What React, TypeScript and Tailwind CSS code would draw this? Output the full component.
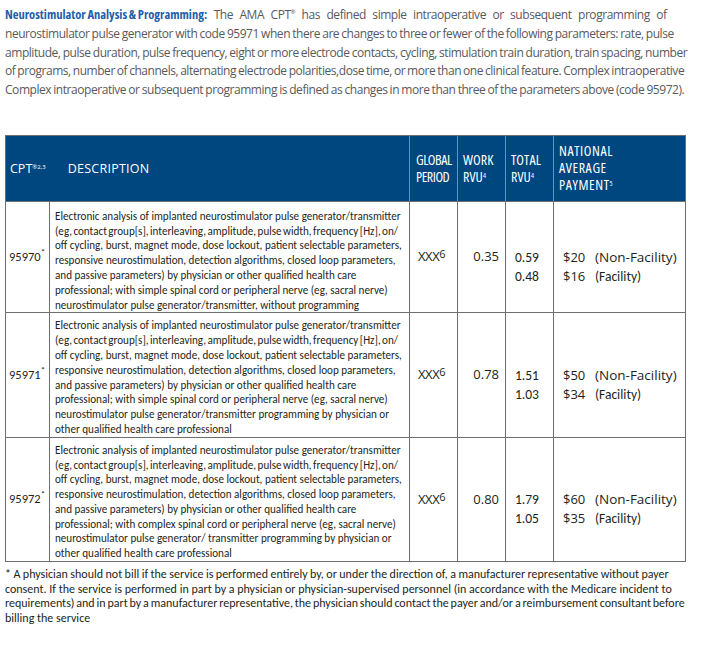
import React from "react";

const rows = [
  {
    code: "95970",
    pt: "pt-[7px]",
    lines: [
      "Electronic analysis of implanted neurostimulator pulse generator/transmitter",
      "(eg, contact group[s], interleaving, amplitude, pulse width, frequency [Hz], on/",
      "off cycling, burst, magnet mode, dose lockout, patient selectable parameters,",
      "responsive neurostimulation, detection algorithms, closed loop parameters,",
      "and passive parameters) by physician or other qualified health care",
      "professional; with simple spinal cord or peripheral nerve (eg, sacral nerve)",
      "neurostimulator pulse generator/transmitter, without programming",
    ],
    work: "0.35",
    total: ["0.59", "0.48"],
    pay: ["$20", "$16"],
  },
  {
    code: "95971",
    pt: "pt-[5px]",
    lines: [
      "Electronic analysis of implanted neurostimulator pulse generator/transmitter",
      "(eg, contact group[s], interleaving, amplitude, pulse width, frequency [Hz], on/",
      "off cycling, burst, magnet mode, dose lockout, patient selectable parameters,",
      "responsive neurostimulation, detection algorithms, closed loop parameters,",
      "and passive parameters) by physician or other qualified health care",
      "professional; with simple spinal cord or peripheral nerve (eg, sacral nerve)",
      "neurostimulator pulse generator/transmitter programming by physician or",
      "other qualified health care professional",
    ],
    work: "0.78",
    total: ["1.51", "1.03"],
    pay: ["$50", "$34"],
  },
  {
    code: "95972",
    pt: "pt-[5px]",
    lines: [
      "Electronic analysis of implanted neurostimulator pulse generator/transmitter",
      "(eg, contact group[s], interleaving, amplitude, pulse width, frequency [Hz], on/",
      "off cycling, burst, magnet mode, dose lockout, patient selectable parameters,",
      "responsive neurostimulation, detection algorithms, closed loop parameters,",
      "and passive parameters) by physician or other qualified health care",
      "professional; with complex spinal cord or peripheral nerve (eg, sacral nerve)",
      "neurostimulator pulse generator/ transmitter programming by physician or",
      "other qualified health care professional",
    ],
    work: "0.80",
    total: ["1.79", "1.05"],
    pay: ["$60", "$35"],
  },
];

export default function App() {
  return (
    <div className="relative w-[712px] h-[645px] overflow-hidden bg-white font-['Open_Sans',sans-serif]">
      <div className="pl-[5px] pt-[6px] text-[12px] leading-[18.75px] text-[#58595b] tracking-[-0.45px] [word-spacing:-0.5px]">
        <div className="whitespace-nowrap">
          <span className="font-bold text-[#1f5ea8] text-[12.5px] [font-stretch:75%] tracking-[0px]">
            Neurostimulator Analysis &amp; Programming:
          </span>
          <span className="[word-spacing:3.8px]">
            {" "}
            The AMA CPT<span className="relative -top-[5px] text-[6px] leading-[0px]">®</span> has defined simple
            intraoperative or subsequent programming of
          </span>
        </div>
        <div className="whitespace-nowrap">
          neurostimulator pulse generator with code 95971 when there are changes to three or fewer of the following
          parameters: rate, pulse
        </div>
        <div className="whitespace-nowrap">
          amplitude, pulse duration, pulse frequency, eight or more electrode contacts, cycling, stimulation train
          duration, train spacing, number
        </div>
        <div className="whitespace-nowrap [word-spacing:-0.7px]">
          of programs, number of channels, alternating electrode polarities,dose time, or more than one clinical
          feature. Complex intraoperative
        </div>
        <div className="whitespace-nowrap">
          Complex intraoperative or subsequent programming is defined as changes in more than three of the parameters
          above (code 95972).
        </div>
      </div>

      <div className="ml-[5px] mt-[35px] w-[681px] border border-[#6d6e71]">
        <div className="grid h-[65px] grid-cols-[43px_360px_48px_48px_48px_132px] bg-[#00467f] leading-[17px] text-white">
          <div className="col-span-2 flex items-center text-[12.5px]">
            <span className="pl-[4px]">
              CPT<span className="relative -top-[4px] text-[6px] leading-[0px]">®2,3</span>
            </span>
            <span className="pl-[22px] tracking-[0.25px]">DESCRIPTION</span>
          </div>
          <div className="flex items-center border-l border-[#7b8ca3] pl-[6px] text-[14px] [font-stretch:75%] tracking-[-0.45px]">
            <div>
              GLOBAL
              <br />
              PERIOD
            </div>
          </div>
          <div className="flex items-center border-l border-[#7b8ca3] pl-[5px] text-[14px] [font-stretch:75%] tracking-[0.1px]">
            <div>
              WORK
              <br />
              RVU<span className="relative -top-[4px] text-[7px] leading-[0px]">4</span>
            </div>
          </div>
          <div className="flex items-center border-l border-[#7b8ca3] pl-[5px] text-[14px] [font-stretch:75%] tracking-[0.1px]">
            <div>
              TOTAL
              <br />
              RVU<span className="relative -top-[4px] text-[7px] leading-[0px]">4</span>
            </div>
          </div>
          <div className="flex items-center border-l border-[#7b8ca3] pl-[5px] text-[14px] [font-stretch:75%] tracking-[0.6px]">
            <div className="leading-[16.6px]">
              NATIONAL
              <br />
              AVERAGE
              <br />
              PAYMENT<span className="relative -top-[4px] text-[7px] leading-[0px]">5</span>
            </div>
          </div>
        </div>

        {rows.map((r) => (
          <div
            key={r.code}
            className="grid grid-cols-[43px_360px_48px_48px_48px_132px] border-t border-[#6d6e71] text-[#231f20]"
          >
            <div className="flex items-center pl-[3px] font-['Carlito','Liberation_Sans',sans-serif] text-[12.5px]">
              {r.code}
              <span className="relative -top-[5px] text-[9px] leading-[0px]">*</span>
            </div>
            <div
              className={
                "border-l border-[#6d6e71] pl-[5px] font-['Carlito','Liberation_Sans',sans-serif] text-[11.1px] leading-[14.8px] " +
                r.pt
              }
            >
              {r.lines.map((l, i) => (
                <div key={i} className={i === 1 ? "whitespace-nowrap [word-spacing:-1.1px]" : "whitespace-nowrap"}>
                  {l}
                </div>
              ))}
            </div>
            <div className="flex items-center border-l border-[#6d6e71] pl-[8px] text-[13px] tracking-[-0.4px]">
              <span>
                XXX<span className="relative -top-[3px] text-[11px] leading-[0px]">6</span>
              </span>
            </div>
            <div className="flex items-center justify-end border-l border-[#6d6e71] pr-[6px] text-[13px]">
              {r.work}
            </div>
            <div className="flex items-center border-l border-[#6d6e71] pl-[9px] font-['Carlito','Liberation_Sans',sans-serif] text-[13.5px]">
              <div className="pt-[19px] leading-[19px]">
                <div>{r.total[0]}</div>
                <div>{r.total[1]}</div>
              </div>
            </div>
            <div className="flex items-center border-l border-[#6d6e71] pl-[9px] text-[13px]">
              <div className="pt-[19px] leading-[19px]">
                <div className="flex">
                  <span className="w-[32px]">{r.pay[0]}</span>
                  <span className="text-[13.5px]">(Non-Facility)</span>
                </div>
                <div className="flex">
                  <span className="w-[32px]">{r.pay[1]}</span>
                  <span className="font-['Carlito','Liberation_Sans',sans-serif] text-[13.5px]">(Facility)</span>
                </div>
              </div>
            </div>
          </div>
        ))}
      </div>

      <div className="pl-[5px] pt-[5px] font-['Carlito','Liberation_Sans',sans-serif] text-[12px] leading-[14.7px] text-[#231f20]">
        <div className="whitespace-nowrap [word-spacing:-0.25px]">
          * A physician should not bill if the service is performed entirely by, or under the direction of, a
          manufacturer representative without payer
        </div>
        <div className="whitespace-nowrap">
          consent. If the service is performed in part by a physician or physician-supervised personnel (in accordance
          with the Medicare incident to
        </div>
        <div className="whitespace-nowrap [word-spacing:-0.85px]">
          requirements) and in part by a manufacturer representative, the physician should contact the payer and/or a
          reimbursement consultant before
        </div>
        <div className="whitespace-nowrap">billing the service</div>
      </div>
    </div>
  );
}
